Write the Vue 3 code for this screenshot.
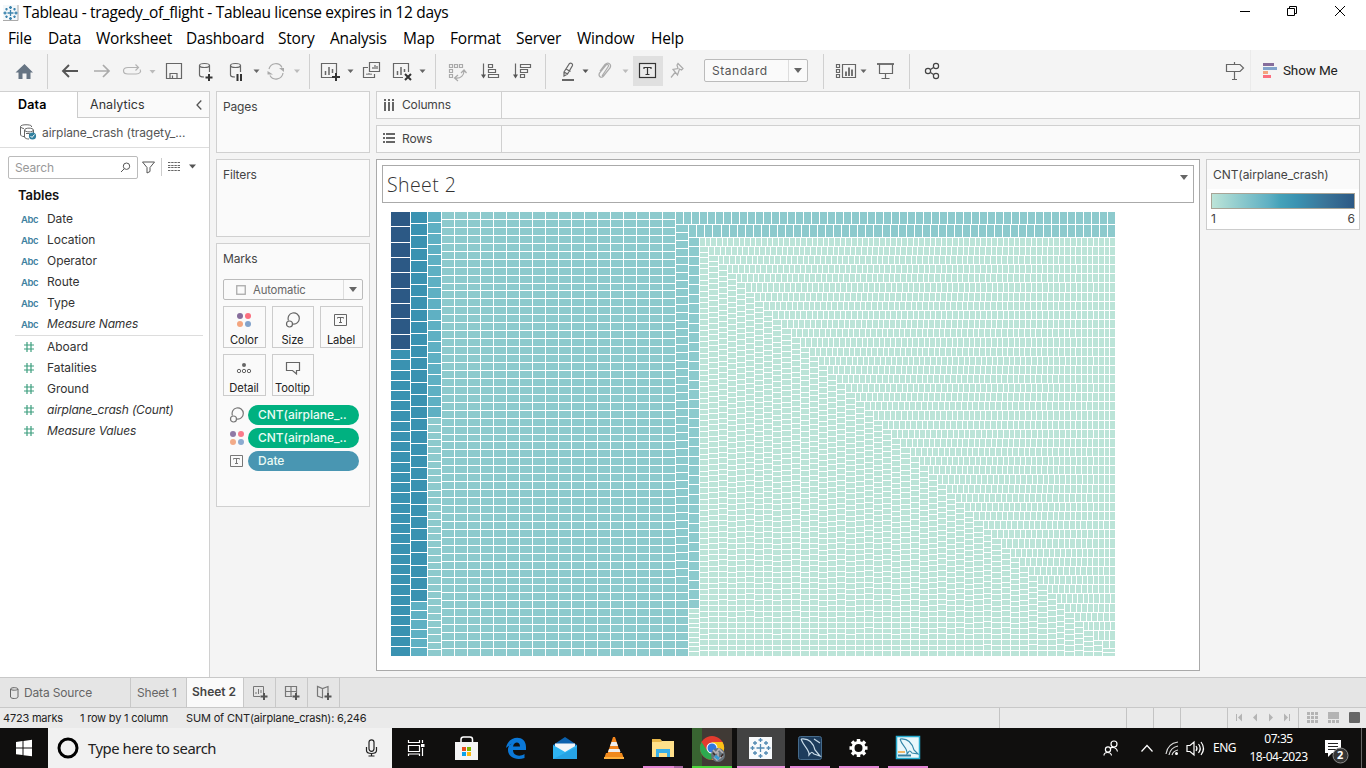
<script setup>
const menus = ['File', 'Data', 'Worksheet', 'Dashboard', 'Story', 'Analysis', 'Map', 'Format', 'Server', 'Window', 'Help']

const dimensions = ['Date', 'Location', 'Operator', 'Route', 'Type', 'Measure Names']
const measures = ['Aboard', 'Fatalities', 'Ground', 'airplane_crash (Count)', 'Measure Values']
const isItalic = (name) => /^Measure|Count/.test(name)

const W = 725
const H = 445
const groups = [
  { value: 6, count: 9, fill: '#2c5985' },
  { value: 4, count: 62, fill: '#3a92b1' },
  { value: 3, count: 25, fill: '#5fb0c3' },
  { value: 2, count: 1242, fill: '#8dcacd' },
  { value: 1, count: 3385, fill: '#bce4d8' },
]

// Squarified treemap; strips run along the shorter side of the remaining area.
function squarify(values, ratio) {
  const out = []
  let x0 = 0
  let y0 = 0
  let i0 = 0
  let total = values.reduce((a, b) => a + b, 0)
  while (i0 < values.length) {
    const dx = W - x0
    const dy = H - y0
    const alpha = Math.max(dy / dx, dx / dy) / (total * ratio)
    const max = values[i0]
    let sum = max
    let best = Math.max(max / (sum * sum * alpha), (sum * sum * alpha) / max)
    let i1 = i0 + 1
    for (; i1 < values.length; i1++) {
      const v = values[i1]
      const next = sum + v
      const beta = next * next * alpha
      const worst = Math.max(max / beta, beta / v)
      if (worst > best) break
      best = worst
      sum = next
    }
    if (dx < dy) {
      const y1 = y0 + (dy * sum) / total
      let x = x0
      for (let i = i0; i < i1; i++) {
        const x1 = x + (dx * values[i]) / sum
        out.push([x, y0, x1, y1, values[i]])
        x = x1
      }
      y0 = y1
    } else {
      const x1 = x0 + (dx * sum) / total
      let y = y0
      for (let i = i0; i < i1; i++) {
        const y1 = y + (dy * values[i]) / sum
        out.push([x0, y, x1, y1, values[i]])
        y = y1
      }
      x0 = x1
    }
    total -= sum
    i0 = i1
  }
  return out
}

const cells = squarify(groups.flatMap((g) => Array(g.count).fill(g.value)), (1 + Math.sqrt(5)) / 2)
const layers = groups.map((g) => ({
  fill: g.fill,
  d: cells
    .filter((c) => c[4] === g.value)
    .map((c) => {
      const [a, b, e, f] = c.map(Math.round)
      return `M${a} ${b}H${e - 1}V${f - 1}H${a}Z`
    })
    .join(''),
}))
</script>

<template>
  <div class="app">
    <header class="titlebar">
      <svg class="appicon" width="16" height="16" viewBox="0 0 16 16"><rect width="15" height="16" fill="#f4f8fa"/><path d="M15 0V15.500H0" fill="none" stroke="#aaa"/><g stroke="#3b83ad" stroke-width="1.300"><path d="M7.500 5V11M4.500 8H10.500M7.500 1V4M6 2.500H9M7.500 12V15M6 13.500H9M2 6.500V9.500M.5 8H3.500M13 6.500V9.500M11.500 8H14.500M3.500 3V5.500M2.300 4.200H4.700M11.500 3V5.500M10.300 4.200H12.700M3.500 10.500V13M2.300 11.700H4.700M11.500 10.500V13M10.300 11.700H12.700"/></g></svg>
      <span class="title">Tableau - tragedy_of_flight - Tableau license expires in 12 days</span>
      <svg class="winbtns" width="126" height="25" viewBox="1240 0 126 25" fill="none" stroke="#000"><path d="M1240 11.500H1250M1287.500 8.500H1294.500V15.500H1287.500ZM1289.500 8V6.500H1296.500V13.500H1295"/><path d="M1335 6L1345 16M1345 6L1335 16"/></svg>
    </header>
    <nav class="menubar"><span v-for="m in menus" :key="m">{{ m }}</span></nav>

    <div class="toolbar">
      <svg width="310" height="41" viewBox="0 50 310 41" fill="none" stroke="#666" stroke-width="1.200">
        <path d="M15.500 72.500L24.500 64L33 72.500H30.500V79H26.500V73.500H22.500V79H18.500V72.500Z" fill="#667483" stroke="none"/>
        <path d="M47.500 54V89M309.500 54V89" stroke="#d0d0d0" stroke-width="1"/>
        <path d="M78 71H63M69 65L63 71L69 77" stroke="#555" stroke-width="1.900"/>
        <path d="M94 71H109M103 65L109 71L103 77" stroke="#aaa" stroke-width="1.700"/>
        <path d="M138 67.500H128C122 67.500 122 74 128 74H136C140 74 141.500 71.500 140 69.500M135.500 64.500L138.500 67.500L135.500 70.500" stroke="#b3b3b3"/>
        <path d="M149.500 70H155.500L152.500 73.500Z" fill="#bbb" stroke="none"/>
        <path d="M166.500 63.500H181.500V78.500H166.500ZM170 78V73.500H177V78M172.500 78V75.500"/>
        <ellipse cx="204.500" cy="65.500" rx="5" ry="2"/><path d="M199.500 65.500V75C199.500 77 203 77 204 77M209.500 65.500V72"/>
        <path d="M209 74V81M205.500 77.500H212.500" stroke="#333" stroke-width="2"/>
        <ellipse cx="235.500" cy="65.500" rx="5" ry="2"/><path d="M230.500 65.500V75C230.500 77 233 77 235 77M240.500 65.500V72"/>
        <path d="M237.500 74V81M241 74V81" stroke="#333" stroke-width="2"/>
        <path d="M253.500 69.500H259.500L256.500 73Z" fill="#666" stroke="none"/>
        <path d="M269 69A7 7 0 0 1 282 67.500M283 73A7 7 0 0 1 270 75.500" stroke="#aaa"/><path d="M279 68H284V72ZM273 74.500H267.500V71Z" fill="#aaa" stroke="none"/>
        <path d="M294 69.500H300L297 73Z" fill="#bbb" stroke="none"/>
      </svg>
      <svg width="236" height="41" viewBox="310 50 236 41" fill="none" stroke="#666" stroke-width="1.200">
        <path d="M332 77.500H321.500V63.500H336.500V73" /><path d="M325.500 75V71M329 75V67M332.500 73V69" stroke-width="1.500"/><path d="M336 73V81M332 77H340" stroke="#333" stroke-width="2"/>
        <path d="M347.500 69.500H353.500L350.500 73ZM419.500 69.500H425.500L422.500 73Z" fill="#666" stroke="none"/>
        <path d="M369.500 62.500H379.500V71.500H369.500ZM368 67.500H363.500V77.500H374.500V74M373 69V67M375 69V65M377 69V66M367 75V73.500M369 75V73M371 75V73.500"/>
        <path d="M403 77.500H393.500V63.500H408.500V72"/><path d="M397.500 75V71M401 75V67M404.500 72V69" stroke-width="1.500"/><path d="M405 74L411 80M411 74L405 80" stroke="#333" stroke-width="2"/>
        <path d="M435.500 54V89M545.500 54V89" stroke="#d0d0d0" stroke-width="1"/>
        <path d="M449.500 64.500H452.500V67.500H449.500ZM454.500 64.500H457.500V67.500H454.500ZM459.500 64.500H462.500V67.500H459.500ZM449.500 69.500H452.500V72.500H449.500ZM449.500 74.500H452.500V77.500H449.500ZM455 78C461 79 464 75 464 71M458 75L454.500 78L458 81M461 73L464 70L466.500 73" stroke="#aaa"/>
        <path d="M483.500 63.500V76M488.500 64.500H492.500V67.500H488.500ZM488.500 69.500H495.500V72.500H488.500ZM488.500 74.500H498.500V77.500H488.500Z"/><path d="M481 74.500H486L483.500 78.500Z" fill="#555" stroke="none"/>
        <path d="M515.500 63.500V76M520.500 64.500H530.500V67.500H520.500ZM520.500 69.500H527.500V72.500H520.500ZM520.500 74.500H524.500V77.500H520.500Z"/><path d="M513 74.500H518L515.500 78.500Z" fill="#555" stroke="none"/>
      </svg>
      <svg width="158" height="41" viewBox="546 50 158 41" fill="none" stroke="#666" stroke-width="1.200">
        <path d="M564 72L569.500 63.500C571 62.500 573 64 572.500 65.500L567.500 74L564 76ZM564 72L567.500 74M566 69L570.500 71.500"/><path d="M562 80H574" stroke-width="2"/>
        <path d="M582.500 69.500H588.500L585.500 73Z" fill="#555" stroke="none"/>
        <path d="M602 76L608 67C609.500 65 607.500 63.500 606 65L599.500 73C598 76 601 79 603.500 76L610 68C612 64 608 61.500 605 64.500L600 71" stroke="#aaa"/>
        <path d="M622.500 69.500H628.500L625.500 73Z" fill="#bbb" stroke="none"/>
        <rect x="633" y="56" width="30" height="30" fill="#e0e0e0" stroke="none"/><rect x="639.500" y="63.500" width="16" height="14" stroke="#333" fill="#eaeaea"/><path d="M644 69V67.500H651V69M647.500 67.500V74M645.500 74.500H649.500" stroke="#333"/>
        <path d="M678 63.500L683 68.500L681.500 70L679.500 69L677.500 75L673 69.500L678 68.500L677 65ZM675.500 72L671 77.500" stroke="#aaa"/>
      </svg>
      <div class="select"><span>Standard</span><i><b class="caret"></b></i></div>
      <svg width="442" height="41" viewBox="808 50 442 41" fill="none" stroke="#666" stroke-width="1.200">
        <path d="M823.500 54V89M909.500 54V89" stroke="#d0d0d0" stroke-width="1"/>
        <path d="M836.500 64.500H839.500V67.500H836.500ZM836.500 69.500H839.500V72.500H836.500ZM836.500 74.500H839.500V77.500H836.500ZM842.500 64.500H855.500V77.500H842.500Z"/><path d="M846 76V71.500M849 76V67.500M852 76V69.500" stroke-width="1.800"/><path d="M860.500 69.500H866.500L863.500 73Z" fill="#666" stroke="none"/>
        <path d="M877 64H894" stroke-width="1.800"/><path d="M879.500 64V73.500H892.500V64M885.500 74V78M881.500 78.500H889.500"/>
        <g stroke="#444"><circle cx="928" cy="71" r="2.600"/><circle cx="936" cy="66" r="2.600"/><circle cx="936" cy="76" r="2.600"/><path d="M930.500 69.500L933.500 67.500M930.500 72.500L933.500 74.500"/></g>
        <path d="M1226.500 64.500H1240L1243.500 68L1240 71.500H1226.500ZM1234.500 62V64M1234.500 72V79M1232 79.500H1237"/>
      </svg>
      <div class="showme"><svg width="15" height="16" viewBox="0 0 15 16"><path fill="#866d9b" d="M0 0H11V3H0Z"/><path fill="#82a3cb" d="M0 4H14V7H0Z"/><path fill="#f3a57f" d="M0 8H5V11H0Z"/><path fill="#fb6f7f" d="M0 12H8V15H0Z"/></svg><span>Show Me</span></div>
    </div>

    <main class="work">
      <aside class="datapane">
        <div class="tabs"><b>Data</b><div><span>Analytics</span><svg width="6" height="10" viewBox="0 0 6 10"><path d="M5.300.5L1 5L5.300 9.500" fill="none" stroke="#555" stroke-width="1.300"/></svg></div></div>
        <div class="source">
          <svg width="17" height="17" viewBox="20 124 17 17" fill="none" stroke="#666"><path d="M20.500 126.500V134C20.500 136 22 136.500 24 136.500M31.500 127V126C31 124.500 21 124 20.500 126.500C21 128 23 128.500 24 128.500"/><path d="M24.500 130V137C25 138.500 27 139 29 139M33.500 130V133M24.500 130C25 127.500 33 127.500 33.500 130C33 132.500 25 132.500 24.500 130"/><path d="M26 133.500H29.500V136"/><circle cx="32.500" cy="136" r="3.600" fill="#31809f" stroke="none"/><path d="M30.500 136L32 137.500L34.500 134.500" stroke="#fff"/></svg>
          <span>airplane_crash (tragety_...</span>
        </div>
        <div class="searchrow">
          <div class="search"><span>Search</span><svg width="11" height="11" viewBox="0 0 11 11" fill="none" stroke="#555"><circle cx="6.500" cy="4.200" r="3.200"/><path d="M4 7L1 10"/></svg></div>
          <svg class="filter" width="13" height="13" viewBox="0 0 13 13" fill="none" stroke="#555"><path d="M.5 1H12.500L8 6.500V10.500L5 12V6.500Z"/></svg>
          <svg class="listicon" width="35" height="18" viewBox="161 159 35 18"><path d="M161.500 159V177" stroke="#ccc"/><path d="M168 163.500H180M168 166.500H180M168 168.500H180M168 171.500H180" stroke="#666" stroke-dasharray="2.400 .8"/><path d="M189 165.500H196L192.500 169.500Z" fill="#555"/></svg>
        </div>
        <h3>Tables</h3>
        <ul class="dims"><li v-for="d in dimensions" :key="d"><small>Abc</small><span :class="{ it: isItalic(d) }">{{ d }}</span></li></ul>
        <ul class="meas"><li v-for="d in measures" :key="d"><svg width="10" height="10" viewBox="0 0 10 10" fill="none" stroke="#3d9e7e"><path d="M3 0V10M7 0V10M0 3H10M0 7H10" stroke-width="1.200"/></svg><span :class="{ it: isItalic(d) }">{{ d }}</span></li></ul>
      </aside>

      <section class="cards">
        <div class="card pages">Pages</div>
        <div class="card filters">Filters</div>
        <div class="card marks">
          <span>Marks</span>
          <div class="marktype"><svg width="10" height="10" viewBox="0 0 10 10"><rect x=".75" y=".75" width="8.500" height="8.500" fill="none" stroke="#aaa" stroke-width="1.300"/></svg><span>Automatic</span><i><b class="caret"></b></i></div>
          <div class="buttons">
            <div><svg width="16" height="16" viewBox="0 0 16 16"><circle cx="4" cy="4" r="3" fill="#866d9b"/><circle cx="12" cy="4" r="3" fill="#fb6f7f"/><circle cx="4" cy="12" r="3" fill="#f3a57f"/><circle cx="12" cy="12" r="3" fill="#82a3cb"/></svg>Color</div>
            <div><svg width="16" height="16" viewBox="0 0 16 16" fill="none" stroke="#666" stroke-width="1.200"><path d="M3.500 8.500A5.600 5.600 0 1 1 8 12"/><circle cx="4.500" cy="12" r="3"/></svg>Size</div>
            <div><svg width="16" height="16" viewBox="0 0 16 16" fill="none" stroke="#666"><path d="M1.500 2.500H13.500V13.500H1.500ZM4.500 6.500V5.500H10.500V6.500M7.500 5.500V10.500M6 10.500H9"/></svg>Label</div>
            <div><svg width="16" height="16" viewBox="0 0 16 16" fill="none" stroke="#666"><circle cx="8" cy="5" r="2" fill="#666" stroke="none"/><circle cx="3" cy="11" r="1.700"/><circle cx="8" cy="11" r="1.700"/><circle cx="13" cy="11" r="1.700"/></svg>Detail</div>
            <div><svg width="16" height="16" viewBox="0 0 16 16" fill="none" stroke="#666" stroke-width="1.200"><path d="M2.500 2.500H14.500V10.500H11.500V14L7.500 10.500H1.500V2.500Z"/></svg>Tooltip</div>
          </div>
          <div class="pillrow"><svg width="16" height="16" viewBox="0 0 16 16" fill="none" stroke="#777" stroke-width="1.200"><path d="M3.500 8.500A5.600 5.600 0 1 1 8 12"/><circle cx="4.500" cy="12" r="3"/></svg><b>CNT(airplane_..</b></div>
          <div class="pillrow"><svg width="16" height="16" viewBox="0 0 16 16"><circle cx="4" cy="4" r="3" fill="#8f79a5"/><circle cx="12" cy="4" r="3" fill="#f97b8b"/><circle cx="4" cy="12" r="3" fill="#f2ab88"/><circle cx="12" cy="12" r="3" fill="#8babd0"/></svg><b>CNT(airplane_..</b></div>
          <div class="pillrow"><svg width="16" height="16" viewBox="0 0 16 16" fill="none" stroke="#777"><path d="M1.500 2.500H13.500V13.500H1.500ZM4.500 6.500V5.500H10.500V6.500M7.500 5.500V10.500M6 10.500H9"/></svg><b class="blue">Date</b></div>
        </div>
      </section>

      <section class="center">
        <div class="shelf"><div><svg width="12" height="12" viewBox="0 0 12 12" fill="#666"><path d="M1 0H3V2H1ZM1 3H3V12H1ZM5 0H7V2H5ZM5 3H7V12H5ZM9 0H11V2H9ZM9 3H11V12H9Z"/></svg><span>Columns</span></div></div>
        <div class="shelf rows"><div><svg width="12" height="12" viewBox="0 0 12 12" fill="#666"><path d="M0 1H2V3H0ZM3 1H12V3H3ZM0 5H2V7H0ZM3 5H12V7H3ZM0 9H2V11H0ZM3 9H12V11H3Z"/></svg><span>Rows</span></div></div>
        <div class="viewrow">
          <div class="sheet">
            <div class="sheettitle"><span>Sheet 2</span><b class="caret"></b></div>
            <svg class="treemap" :width="W" :height="H" shape-rendering="crispEdges"><path v-for="l in layers" :key="l.fill" :d="l.d" :fill="l.fill" /></svg>
          </div>
          <div class="legend"><p>CNT(airplane_crash)</p><div class="ramp"></div><div class="ends"><span>1</span><span>6</span></div></div>
        </div>
      </section>
    </main>

    <div class="sheettabs">
      <div class="ds"><svg width="9" height="12" viewBox="0 0 9 12" fill="none" stroke="#666"><path d="M.5 2V10C1 12 7.500 12 8 10V2C7.500 .2 1 .2 .5 2C1 3.600 7.500 3.600 8 2"/></svg><span>Data Source</span></div>
      <div class="s1">Sheet 1</div>
      <div class="s2">Sheet 2</div>
      <div class="add"><svg width="16" height="16" viewBox="0 0 16 16" fill="none" stroke="#777"><path d="M8 11.500H1.500V1.500H11.500V8M4 9V7M6.500 9V4M9 8V5"/><path d="M12 8V15M8.500 11.500H15.500" stroke="#555" stroke-width="2"/></svg></div>
      <div class="add"><svg width="16" height="16" viewBox="0 0 16 16" fill="none" stroke="#777" stroke-width="1.200"><path d="M8 11.500H1.500V1.500H12.500V8M1.500 6.500H12.500M7 1.500V11"/><path d="M12 8V15M8.500 11.500H15.500" stroke="#555" stroke-width="2"/></svg></div>
      <div class="add"><svg width="16" height="16" viewBox="0 0 16 16" fill="none" stroke="#777" stroke-width="1.200"><path d="M7 13L1.500 11V1.500L6.500 3.500L12 1.500V8M6.500 3.500V12.500"/><path d="M12 8V15M8.500 11.500H15.500" stroke="#555" stroke-width="2"/></svg></div>
    </div>
    <div class="status">
      <span class="st1">4723 marks</span><span class="st2">1 row by 1 column</span><span class="st3">SUM of CNT(airplane_crash): 6,246</span>
      <svg width="367" height="20" viewBox="999 708 367 20"><path d="M999.500 708V728M1126.500 708V728M1153.500 708V728M1180.500 708V728M1227.500 708V728M1298.500 708V728" stroke="#c4c4c4"/><g fill="#b4b4b4"><path d="M1236 714H1237V721H1236ZM1242 713.500V721.500L1238 717.500ZM1257 713.500V721.500L1253 717.500ZM1269 713.500V721.500L1273 717.500ZM1284 713.500V721.500L1288 717.500ZM1289 714H1290V721H1289Z"/><path d="M1307 712h3v3h-3zM1311 712h3v3h-3zM1315 712h3v3h-3zM1307 716h3v3h-3zM1311 716h3v3h-3zM1315 716h3v3h-3zM1307 720h3v3h-3zM1311 720h3v3h-3zM1315 720h3v3h-3zM1328 712h11v7h-11zM1328 720h3v3h-3zM1332 720h3v3h-3zM1336 720h3v3h-3z"/></g><rect x="1349" y="712" width="11" height="11" rx="1" fill="#666"/></svg>
    </div>

    <footer class="taskbar">
      <svg width="48" height="40" viewBox="0 728 48 40" fill="#fff"><path d="M16 742L22.500 741V747.500H16ZM23.500 741L32 739.800V747.500H23.500ZM16 748.500H22.500V755L16 754.200ZM23.500 748.500H32V756.200L23.500 755.200Z"/></svg>
      <div class="wsearch">
        <svg width="22" height="22" viewBox="0 0 22 22"><circle cx="11" cy="11" r="9" fill="none" stroke="#000" stroke-width="3"/></svg>
        <span>Type here to search</span>
        <svg width="13" height="18" viewBox="0 0 13 18" fill="none" stroke="#222" stroke-width="1.200"><rect x="4" y=".8" width="5" height="11.500" rx="2.500"/><path d="M1.500 8V11.500C1.500 15.500 11.500 15.500 11.500 11.500V8M6.500 14.500V17M3.500 17H9.500"/></svg>
      </div>
      <svg width="708" height="40" viewBox="392 728 708 40">
        <g fill="none" stroke="#fff" stroke-width="1.200"><path d="M408.500 740V742.500H419.500V740M408.500 745.500H419.500V751.500H408.500ZM408.500 756V754H419.500V756M422.500 740V743M422.500 748V756"/><path d="M421 745.500H424.500" stroke-width="3"/></g>
        <path d="M461 744V739.500Q461 737 463.500 737H470Q472.500 737 472.500 739.500V744" fill="none" stroke="#fff" stroke-width="1.500"/><rect x="455" y="742" width="23" height="18" fill="#f5f5f5"/><path fill="#e94f20" d="M462 747h4v4h-4z"/><path fill="#80b901" d="M467 747h4v4h-4z"/><path fill="#0aa2eb" d="M462 752h4v4h-4z"/><path fill="#fbb811" d="M467 752h4v4h-4z"/>
        <path d="M506 748C508 735 526 734 526 747V750H513C513 756 520 757 524.500 754V758C516 761 508 757 508 750C508 746 510 744 513 743C511 744 510 745 506 748ZM513 746.500H520C520 741 514 741 513 746.500Z" fill="#0b78d7" fill-rule="evenodd"/>
        <path d="M553 745L565 737L577 745V759H553Z" fill="#0b61ae"/><path d="M555 743.500H575V752L565 755L555 752Z" fill="#f1f5f8"/><path d="M553 745L565 752L577 745V759H553Z" fill="#2fb4f2"/><path d="M553 759L577 747V759Z" fill="#26a3e5"/>
        <path d="M613 737H615L621 755H607Z" fill="#f3851c"/><path d="M611.500 742H616.500L618 746H610ZM609 749H619.500L620.500 752H608Z" fill="#eee"/><path d="M606 753H622L624 759H604Z" fill="#f08a1d"/><path d="M604 757H624V759H604Z" fill="#ffb13d"/>
        <path d="M652 739H660L662 741H674V757H652Z" fill="#ffe08a"/><path d="M652 739H660L662 742H652Z" fill="#e8b84a"/><path d="M656 749H670V757H667V753H659V757H656Z" fill="#38afe8"/>
        <rect x="643" y="766" width="31" height="2" fill="#e285d5"/><rect x="674" y="766" width="9" height="2" fill="#a866a2"/>
        <rect x="692" y="728" width="10" height="38" fill="#386431"/><rect x="702" y="728" width="30" height="38" fill="#403a35"/><rect x="692" y="766" width="40" height="2" fill="#4cd83b"/>
        <circle cx="712" cy="748" r="12" fill="#e33b2e"/><path d="M701.600 742A12 12 0 0 0 711 760L717 750.500H707Z" fill="#2da94f"/><path d="M712 742H722.500A12 12 0 0 1 712 760L717 750Z" fill="#fbc116"/><circle cx="712" cy="748" r="5.500" fill="#fff"/><circle cx="712" cy="748" r="4.500" fill="#3178df"/><circle cx="718" cy="755" r="7" fill="#67737b"/><path d="M713 750L716 753L719 749L723 753M714 757L717 760L723 756M718 752V757" stroke="#b9b3b6" stroke-width="1.500" fill="none"/><path d="M715 756L719 759" stroke="#379bd7" stroke-width="3"/><path d="M713 753L715 755M721 757L723 754" stroke="#3a2a2a" stroke-width="1.500"/>
        <rect x="737" y="728" width="48" height="38" fill="#434343"/><rect x="737" y="766" width="48" height="2" fill="#e992da"/><rect x="749" y="737" width="23" height="22" fill="#f7f9fb"/><g stroke="#5289b2" stroke-width="1.300"><path d="M760.500 744V752M756.500 748H764.500M760.500 738V742M758.500 740H762.500M760.500 754V758M758.500 756H762.500M752.500 746V750M750.500 748H754.500M768.500 746V750M766.500 748H770.500M755 741V745M753 743H757M766 741V745M764 743H768M755 751V755M753 753H757M766 751V755M764 753H768"/></g>
        <rect x="790" y="766" width="40" height="2" fill="#e285d5"/><rect x="798.500" y="736.500" width="23" height="23" rx="2" fill="#1d3c5c" stroke="#456a8a"/><path d="M801 739C809 738 813 742 815 750L820 756L814 754C811 751 811 753 809 755C810 750 804 747 801 739M814 739L820 743" fill="none" stroke="#c9dce9" stroke-width="1.200"/>
        <g transform="translate(858.500 748)" fill="none" stroke="#fff"><circle r="5.500" stroke-width="3"/><g stroke-width="3.500"><path d="M0-6V-9M0 6V9M-6 0H-9M6 0H9M-4.500-4.500L-6.500-6.500M4.500-4.500L6.500-6.500M-4.500 4.500L-6.500 6.500M4.500 4.500L6.500 6.500"/></g></g><rect x="839" y="766" width="40" height="2" fill="#e285d5"/>
        <rect x="896.500" y="736.500" width="23" height="22" fill="#e9f7fb" stroke="#27acd0" stroke-width="1.500"/><path d="M900 739C908 738 912 743 914 750L918 754L912 753C909 749 909 752 907 754C908 748 902 746 900 739" fill="none" stroke="#3285a7" stroke-width="1.100"/><path d="M898 752H905" stroke="#efa33d" stroke-width="1.500"/><path d="M898 755.500H911" stroke="#347fa1" stroke-width="2"/><rect x="888" y="766" width="40" height="2" fill="#e285d5"/>
      </svg>
      <svg width="113" height="40" viewBox="1100 728 113 40" fill="none" stroke="#fff" stroke-width="1.200">
        <circle cx="1114" cy="744" r="3"/><circle cx="1108" cy="749.500" r="2.600"/><path d="M1104 755.500C1104 751.500 1111 751.500 1111.500 755.500M1110 748.500C1113 746 1117 748 1117.500 751.500"/>
        <path d="M1141.500 751.500L1147 745.500L1152.500 751.500"/>
        <path d="M1166 754C1167 747 1171 743 1178 742M1169 755C1170 750 1173 747 1178 746M1172 755C1173 752 1175 750.500 1178 750" stroke="#ddd"/><circle cx="1176.500" cy="753.500" r="1.500" fill="#fff" stroke="none"/>
        <path d="M1187 745.500H1190L1194 742V755L1190 751.500H1187ZM1196 746Q1198 748.500 1196 751M1198.500 744Q1202 748.500 1198.500 753M1201 742Q1206 748.500 1201 755"/>
      </svg>
      <span class="eng">ENG</span>
      <div class="clock"><span>07:35</span><span>18-04-2023</span></div>
      <div class="notif"><svg width="24" height="28" viewBox="1325 738 24 28"><path d="M1325 740H1341V753H1332L1328 757V753H1325Z" fill="#fff"/><path d="M1328 743.500H1338M1328 746.500H1338M1328 749.500H1336" stroke="#222"/><circle cx="1340.500" cy="755.500" r="7.500" fill="#353535" stroke="#8b8b8b"/></svg><b>2</b></div>
      <i class="peek"></i>
    </footer>
  </div>
</template>

<style>
body { margin: 0; background: #f4f4f4; }
</style>
<style scoped>
* { box-sizing: border-box; }
.app { width: 1366px; height: 768px; overflow: hidden; display: flex; flex-direction: column; background: #f4f4f4; font: 12px/16px Inter, "Noto Sans", sans-serif; color: #333; white-space: nowrap; }
svg { display: block; flex: none; }
i, b { font-style: normal; }
.caret { width: 0; height: 0; border: 4px solid transparent; border-top: 5px solid #666; border-bottom: 0; }
.titlebar { height: 25px; background: #fff; display: flex; align-items: center; padding-left: 3px; font: 15.500px/22px "Open Sans", "Noto Sans", sans-serif; color: #000; }
.title { margin: -2px 0 0 4px; letter-spacing: -.34px; }
.winbtns { margin-left: auto; }
.menubar { height: 25px; background: #fff; display: grid; grid-template-columns: 40px 48px 90px 92px 52px 73px 47px 66px 61px 74px 60px; padding-left: 8px; font: 15.500px/27px "Open Sans", "Noto Sans", sans-serif; letter-spacing: -.2px; color: #000; }
.toolbar { height: 41px; flex: none; display: flex; }
.select { width: 104px; height: 23px; margin-top: 9px; border: 1px solid #bbb; border-radius: 2px; background: #fafafa; display: flex; justify-content: space-between; color: #555; line-height: 21px; padding-left: 7px; letter-spacing: .55px; }
.select i, .marktype i { width: 19px; border-left: 1px solid #ddd; display: flex; align-items: center; justify-content: center; }
.showme { width: 116px; border-left: 1px solid #eaeaea; display: flex; align-items: center; gap: 5px; padding-left: 12px; font: 13.500px/20px Roboto, sans-serif; color: #222; }
.showme span { letter-spacing: -.15px; margin-top: -2px; }
.work { height: 586px; flex: none; display: flex; }
.datapane { width: 210px; background: #fff; border-right: 1px solid #d0d0d0; border-top: 1px solid #d0d0d0; }
.tabs { display: flex; height: 26px; font-size: 12.500px; line-height: 25px; }
.tabs b { width: 77px; padding-left: 18px; color: #000; font-weight: 600; letter-spacing: .15px; }
.tabs div { flex: 1; display: flex; align-items: center; justify-content: space-between; padding: 0 7px 0 12px; background: #fafafa; border-left: 1px solid #ccc; border-bottom: 1px solid #ccc; letter-spacing: .05px; }
.source { height: 30px; border-bottom: 1px solid #ddd; display: flex; align-items: center; gap: 5px; padding-left: 20px; color: #555; letter-spacing: -.08px; }
.searchrow { display: flex; align-items: center; height: 23px; margin: 8px 0 0 8px; }
.search { width: 130px; height: 23px; border: 1px solid #bbb; border-radius: 2px; display: flex; align-items: center; justify-content: space-between; padding: 0 6px 0 6px; color: #999; letter-spacing: -.15px; }
.filter { margin-left: 4px; }
.listicon { margin: -2px 0 0 6px; }
h3 { margin: 8px 0 4px 18px; font-size: 13px; line-height: 16px; color: #111; font-weight: 600; letter-spacing: -.05px; }
ul { list-style: none; margin: 0; padding: 0; }
.dims { border-bottom: 1px solid #ddd; margin: 0 6px 0 15px; height: 129px; padding-top: 1px; }
.meas { margin: 0 0 0 15px; }
li { display: flex; height: 21px; align-items: center; letter-spacing: -.05px; }
li small { width: 26px; margin-left: 6px; font-size: 9.500px; font-weight: 600; color: #3f819f; padding-top: 2px; letter-spacing: -.4px; }
li svg { margin: 0 13px 0 9px; }
.it { font-style: italic; letter-spacing: -.17px; }
.cards { width: 154px; margin-left: 6px; display: flex; flex-direction: column; gap: 6px; }
.card { border: 1px solid #d0d0d0; background: #fafafa; padding: 7px 6px; color: #444; letter-spacing: -.15px; }
.pages { height: 62px; }
.filters { height: 78px; }
.marks { height: 264px; }
.marktype { width: 140px; height: 21px; margin-top: 12px; border: 1px solid #bbb; border-radius: 2px; display: flex; align-items: center; font-size: 11.300px; color: #666; padding-left: 12px; }
.marktype span { margin-left: 7px; }
.marktype i { margin-left: auto; height: 19px; }
.buttons { display: grid; grid-template-columns: 43px 42px 43px; gap: 6px; margin: 6px 0 9px; }
.buttons div { height: 42px; border: 1px solid #ccc; display: flex; flex-direction: column; align-items: center; padding: 5px 1px 0 0; line-height: 15px; gap: 5px; font-size: 11.200px; letter-spacing: -.1px; color: #222; }
.pillrow { display: flex; align-items: center; gap: 3px; padding-left: 6px; margin-bottom: 3px; }
.pillrow b { width: 111px; height: 20px; border-radius: 10px; background: #00b180; color: #e9fbf4; padding-left: 10px; line-height: 20px; font-weight: 500; letter-spacing: -.03px; }
.pillrow b.blue { background: #4996b2; }
.center { width: 984px; margin-left: 6px; display: flex; flex-direction: column; gap: 6px; }
.shelf { height: 28px; border: 1px solid #d0d0d0; background: #fafafa; }
.shelf div { width: 125px; height: 26px; border-right: 1px solid #d0d0d0; display: flex; align-items: center; gap: 7px; padding-left: 6px; color: #444; letter-spacing: -.15px; }
.shelf.rows svg { margin-top: -2px; }
.viewrow { display: flex; gap: 6px; align-items: flex-start; }
.sheet { width: 824px; height: 512px; border: 1px solid #aaa; background: #fff; padding: 5px; }
.sheettitle { height: 38px; border: 1px solid #aaa; display: flex; justify-content: space-between; padding: 8px 5px 0 4px; font: 300 19.500px/22px "Open Sans", Inter, sans-serif; letter-spacing: .42px; color: #333; }
.sheettitle .caret { margin-top: 1px; }
.treemap { margin: 9px 0 0 9px; }
.legend { width: 154px; height: 71px; border: 1px solid #ccc; background: #fff; color: #444; }
.legend p { margin: 0; height: 29px; padding: 7px 6px; background: #fafafa; letter-spacing: -.06px; }
.ramp { height: 16px; margin: 4px 4px 0; border: 1px solid #a8a496; background: linear-gradient(90deg, #bce4d8 0%, #8dcacd 20%, #5fb0c3 40%, #45a2b9 48%, #3a92b1 60%, #3a7498 80%, #2c5985 100%); }
.ends { display: flex; justify-content: space-between; padding: 2px 4px; }
.sheettabs { height: 31px; flex: none; background: #e5e5e5; border: solid #c8c8c8; border-width: 1px 0; display: flex; color: #666; line-height: 29px; }
.sheettabs > div { border-right: 1px solid #c8c8c8; display: flex; align-items: center; flex: none; }
.ds { width: 131px; padding-left: 10px; gap: 5px; letter-spacing: -.15px; }
.s1 { width: 56px; padding-left: 6px; letter-spacing: -.2px; }
.s2 { width: 57px; padding: 0 0 2px 5px; background: #fafafa; color: #444; font-weight: 600; }
.add { width: 32px; justify-content: center; }
.status { height: 20px; flex: none; background: #eaeaea; display: flex; align-items: center; font-size: 11px; padding-left: 3px; color: #222; }
.st1 { width: 77px; letter-spacing: -.2px; }
.st2 { width: 106px; letter-spacing: -.2px; }
.st3 { letter-spacing: -.15px; }
.status svg { margin-left: auto; }
.taskbar { height: 40px; flex: none; background: #100f0e; display: flex; align-items: center; color: #fff; font-family: "Noto Sans", sans-serif; }
.wsearch { width: 344px; height: 40px; background: #f1f1f1; display: flex; align-items: center; color: #222; font-size: 14.800px; padding: 0 14px 0 9px; }
.wsearch span { margin-left: 9px; letter-spacing: -.43px; flex: 1; }
.eng { width: 31px; font-size: 12px; letter-spacing: -.5px; }
.clock { width: 69px; text-align: center; font-size: 12px; line-height: 18px; display: flex; flex-direction: column; letter-spacing: -.45px; }
.notif { position: relative; margin: 8px 0 0 12px; }
.notif b { position: absolute; left: 12px; top: 9px; font-size: 11px; line-height: 16px; }
.peek { width: 1px; height: 40px; background: #666; margin-left: auto; margin-right: 4px; }
</style>
